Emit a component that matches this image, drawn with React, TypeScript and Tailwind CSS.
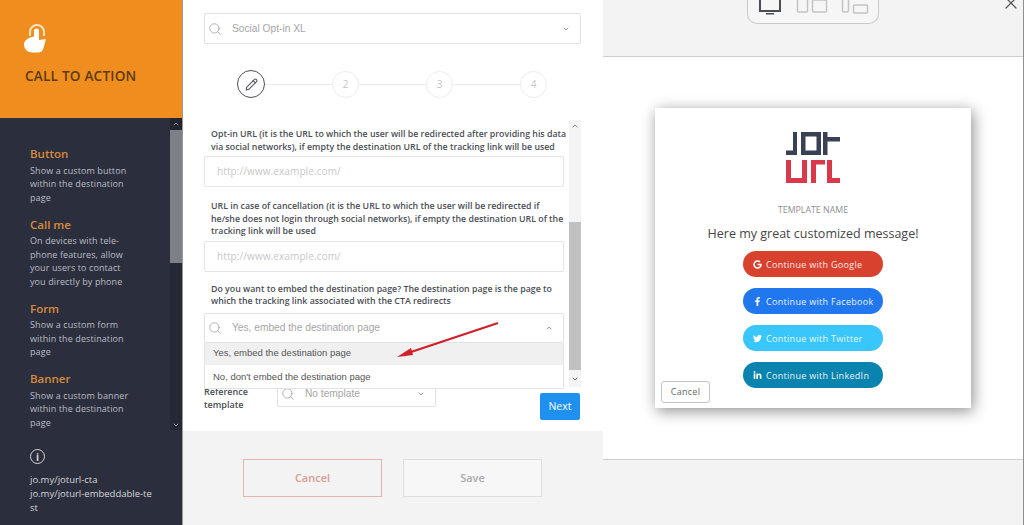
import React from 'react';
import { Search, ChevronDown, ChevronUp, Pencil, X } from 'lucide-react';
import { FaGoogle, FaFacebookF, FaTwitter, FaLinkedinIn } from 'react-icons/fa';

const openSans = "font-['Open_Sans',sans-serif]";
const arial = "font-['Liberation_Sans',Arial,sans-serif]";

const ctaItems = [
  { title: 'Button', lines: ['Show a custom button', 'within the destination', 'page'] },
  { title: 'Call me', lines: ['On devices with tele-', 'phone features, allow', 'your users to contact', 'you directly by phone'] },
  { title: 'Form', lines: ['Show a custom form', 'within the destination', 'page'] },
  { title: 'Banner', lines: ['Show a custom banner', 'within the destination', 'page'] },
];

const socialButtons = [
  { label: 'Continue with Google', icon: FaGoogle, color: 'bg-[#d9412f]' },
  { label: 'Continue with Facebook', icon: FaFacebookF, color: 'bg-[#2178ee]' },
  { label: 'Continue with Twitter', icon: FaTwitter, color: 'bg-[#38c6fb]' },
  { label: 'Continue with LinkedIn', icon: FaLinkedinIn, color: 'bg-[#0a84ae]' },
];

const TouchIcon = () => (
  <svg width="24" height="30" viewBox="0 0 24 30">
    <path d="M6 12V8a7 7 0 0 1 14 0v4" fill="none" stroke="#fbe3c2" strokeWidth="2" />
    <path
      d="M10 7a2.5 2.5 0 0 1 5 0v9l7-1-2.500 9a6 6 0 0 1-6 4.500H8a8 8 0 0 1-8-8c0-4 4-7 10-8z"
      fill="#fff"
    />
  </svg>
);

const JotUrlLogo = () => (
  <svg width="54" height="51" viewBox="0 0 54 51">
    <g fill="#3a4055">
      <rect x="0" y="18.500" width="11" height="4.500" />
      <rect x="7" y="0" width="4" height="23" />
      <path d="M15 0h20v23H15zM19.500 4.500v14h11v-14z" fillRule="evenodd" />
      <rect x="37" y="0" width="4.500" height="23" />
      <rect x="41" y="5" width="13" height="4.500" />
    </g>
    <g fill="#d9394a">
      <path d="M0 28h5v18h11V28h5v23H0z" />
      <path d="M25 51V28h14v4.500h-9V51z" />
      <path d="M41 28h5v18h8v5H41z" />
    </g>
  </svg>
);

const SelectBox = ({ text, open, className }: { text: string; open?: boolean; className: string }) => (
  <div className={`flex items-center border border-[#e2e2e2] bg-white rounded-[2px] ${className}`}>
    <Search className="w-[14px] h-[14px] ml-[3px] text-[#a8a8a8] shrink-0" strokeWidth={1.5} />
    <span className={`${arial} ml-[10px] text-[10.2px] text-[#a5a5a5] flex-1 truncate`}>{text}</span>
    {open ? (
      <ChevronUp className="w-[8px] h-[8px] mr-[10px] text-[#999]" strokeWidth={3} />
    ) : (
      <ChevronDown className="w-[8px] h-[8px] mr-[10px] text-[#999]" strokeWidth={3} />
    )}
  </div>
);

const UrlInput = () => (
  <div className={`${openSans} h-[31px] border border-[#e4e4e4] bg-white rounded-[2px] flex items-center pl-[12px] text-[10px] text-[#c8c8c8] tracking-[0.1px]`}>
    http://www.example.com/
  </div>
);

const Sidebar = () => (
  <aside className={`${openSans} w-[183px] shrink-0 flex flex-col bg-[#2b2f3d] border-r border-[#9a9a9a]`}>
    <div className="h-[118px] bg-[#ef8e1e] pl-[24px] pt-[24px]">
      <TouchIcon />
      <h1 className="mt-[12px] ml-px text-[13.6px] leading-[20px] font-semibold text-[#5c3a14] tracking-[0.2px]">CALL TO ACTION</h1>
    </div>
    <div className="h-[312px] flex shrink-0">
      <div className="flex-1 pl-[30px] pt-[28px] flex flex-col gap-[12.5px]">
        {ctaItems.map((item) => (
          <div key={item.title}>
            <div className="text-[11.5px] leading-[16px] font-semibold text-[#d98a3a] mb-[1.5px]">{item.title}</div>
            {item.lines.map((line) => (
              <div key={line} className="text-[9px] leading-[13.5px] text-[#b9bcc4] tracking-[0.1px] whitespace-nowrap">
                {line}
              </div>
            ))}
          </div>
        ))}
      </div>
      <div className="w-[12px] flex flex-col bg-[#252935]">
        <div className="h-[12px] flex items-center justify-center bg-[#22252f]">
          <ChevronUp className="w-[8px] h-[8px] text-[#8a8d95]" strokeWidth={3} />
        </div>
        <div className="h-[133px] bg-[#7d8087]" />
        <div className="flex-1" />
        <div className="h-[10px] flex items-center justify-center">
          <ChevronDown className="w-[8px] h-[8px] text-[#8a8d95]" strokeWidth={3} />
        </div>
      </div>
    </div>
    <div className="pl-[30px] pt-[19px] text-[#d4d6da]">
      <div className="w-[15px] h-[15px] rounded-full border-[1.5px] border-[#d4d6da] flex items-center justify-center text-[10px] font-bold leading-none">
        i
      </div>
      <div className="mt-[9px] text-[9.5px] leading-[14px] whitespace-nowrap">
        jo.my/joturl-cta
        <br />
        jo.my/joturl-embeddable-te
        <br />
        st
      </div>
    </div>
  </aside>
);

const Stepper = () => (
  <div className="mt-[26px] ml-[33px] flex items-center w-[310px]">
    <div className="w-[28px] h-[28px] rounded-full border-[1.5px] border-[#4c4f55] flex items-center justify-center shrink-0">
      <Pencil className="w-[13px] h-[13px] text-[#55585e]" strokeWidth={2} />
    </div>
    {['2', '3', '4'].map((n) => (
      <React.Fragment key={n}>
        <div className="flex-1 h-px bg-[#ececec]" />
        <div className={`${openSans} w-[27px] h-[27px] rounded-full border border-[#ececec] flex items-center justify-center text-[10px] text-[#c4c4c4] shrink-0`}>
          {n}
        </div>
      </React.Fragment>
    ))}
  </div>
);

const labelClass = `${openSans} text-[8.8px] leading-[12.5px] font-semibold text-[#4b4e55] pl-[7px] whitespace-nowrap`;

const FormPanel = () => (
  <main className="w-[420px] shrink-0 flex flex-col">
    <div className="h-[431px] shrink-0 bg-white pl-[21px] pr-[22px] pt-[13px]">
      <SelectBox text="Social Opt-in XL" className="h-[31px]" />
      <Stepper />
      <div className="mt-[22px] h-[267px] flex">
        <div className="w-[360px] shrink-0 pt-[8px]">
          <div className={labelClass}>
            Opt-in URL (it is the URL to which the user will be redirected after providing his data
            <br />
            via social networks), if empty the destination URL of the tracking link will be used
          </div>
          <div className="mt-[3px]">
            <UrlInput />
          </div>
          <div className={`${labelClass} mt-[13px]`}>
            URL in case of cancellation (it is the URL to which the user will be redirected if
            <br />
            he/she does not login through social networks), if empty the destination URL of the
            <br />
            tracking link will be used
          </div>
          <div className="mt-[3px]">
            <UrlInput />
          </div>
          <div className={`${labelClass} mt-[11px]`}>
            Do you want to embed the destination page? The destination page is the page to
            <br />
            which the tracking link associated with the CTA redirects
          </div>
          <div className="relative mt-[5px]">
            <SelectBox text="Yes, embed the destination page" open className="h-[30px]" />
            <div className={`${arial} absolute left-0 right-0 top-[30px] z-10 h-[46px] border border-t-0 border-[#e2e2e2] bg-white text-[9.5px] text-[#555] rounded-b-[2px]`}>
              <div className="h-[22px] bg-[#f0f0f0] flex items-center pl-[8px]">Yes, embed the destination page</div>
              <div className="h-[23px] mt-px flex items-center pl-[8px]">No, don't embed the destination page</div>
            </div>
            {/* red annotation arrow */}
            <svg className="absolute left-[190px] top-[8px] z-20" width="110" height="40" viewBox="0 0 110 40">
              <path d="M104 2 L14 32" stroke="#d0202a" strokeWidth="2.2" fill="none" />
              <path d="M3 36 L17 27 L19 34 Z" fill="#d0202a" />
            </svg>
          </div>
        </div>
        <div className="w-[12px] ml-[5px] flex flex-col bg-[#f4f4f4]">
          <div className="h-[12px] flex items-center justify-center">
            <ChevronUp className="w-[8px] h-[8px] text-[#888]" strokeWidth={3} />
          </div>
          <div className="h-[90px]" />
          <div className="flex-1 bg-[#c1c1c1]" />
          <div className="h-[17px] flex items-center justify-center">
            <ChevronDown className="w-[8px] h-[8px] text-[#666]" strokeWidth={3} />
          </div>
        </div>
      </div>
      <div className="flex items-start -mt-[7px]">
        <div className={`${openSans} w-[73px] mt-[6px] text-[9px] leading-[12.5px] font-semibold text-[#4b4e55]`}>
          Reference
          <br />
          template
        </div>
        <SelectBox text="No template" className="w-[159px] h-[27px]" />
        <button className={`${openSans} ml-[104px] mt-[13px] w-[40px] h-[27px] bg-[#1e90f0] text-white text-[10.5px] rounded-[2px]`}>
          Next
        </button>
      </div>
    </div>
    <div className={`${openSans} flex-1 bg-[#f3f3f3] pl-[60px] pt-[28px] flex gap-[21px] text-[11px] font-semibold`}>
      <button className="w-[139px] h-[38px] border border-[#e6b4ac] text-[#d99c94]">Cancel</button>
      <button className="w-[139px] h-[38px] border border-[#dedede] bg-[#f7f7f7] text-[#aaaaaa]">Save</button>
    </div>
  </main>
);

const DeviceSwitcher = () => (
  <div className="w-[132px] h-[24px] ml-[144px] border border-t-0 border-[#c9c9c9] rounded-b-[10px] bg-[#f6f6f6] flex items-start pl-[11px]">
    <svg width="118" height="20" viewBox="0 0 118 20" fill="none">
      <rect x="1" y="-6" width="20" height="17" stroke="#4a4d52" strokeWidth="2" />
      <rect x="7" y="13" width="8" height="1.5" fill="#4a4d52" />
      <rect x="38.5" y="-6" width="10" height="18" rx="1" stroke="#c4c4c4" strokeWidth="1.5" />
      <rect x="53.5" y="0" width="14" height="12" rx="1" stroke="#c4c4c4" strokeWidth="1.5" />
      <rect x="83.5" y="-4" width="6" height="16" rx="1.5" stroke="#c4c4c4" strokeWidth="1.5" />
      <rect x="94.5" y="5" width="14" height="8" rx="1" stroke="#c4c4c4" strokeWidth="1.5" />
    </svg>
  </div>
);

const PreviewCard = () => (
  <div className={`${openSans} relative w-[316px] h-[300px] bg-white shadow-[2px_3px_14px_rgba(0,0,0,0.45)] flex flex-col items-center pt-[24px]`}>
    <JotUrlLogo />
    <div className="mt-[21px] text-[8.8px] leading-[12px] text-[#8f8f8f]">TEMPLATE NAME</div>
    <div className="mt-[9px] text-[12.5px] leading-[18px] text-[#454545]">Here my great customized message!</div>
    <div className="mt-[8px] flex flex-col gap-[11px]">
      {socialButtons.map((btn) => (
        <div key={btn.label} className={`${btn.color} w-[140px] h-[26px] rounded-full flex items-center pl-[7px] text-white`}>
          <span className="w-[14px] flex justify-center">
            <btn.icon className="w-[9px] h-[9px]" />
          </span>
          <span className="ml-[2px] mt-px text-[9px] tracking-[0.3px] whitespace-nowrap opacity-90">{btn.label}</span>
        </div>
      ))}
    </div>
    <button className="absolute left-[6px] bottom-[5px] w-[49px] h-[22px] border border-[#c4c4c4] rounded-[3px] bg-white text-[9px] tracking-[0.3px] text-[#666]">
      Cancel
    </button>
  </div>
);

const PreviewPanel = () => (
  <section className="relative flex-1 flex flex-col bg-[#f3f3f3] border-r border-[#8f8f8f]">
    <div className="h-[57px] shrink-0 border-b border-[#cfcfcf]">
      <DeviceSwitcher />
    </div>
    <div className="h-[402px] shrink-0 bg-white flex items-center justify-center">
      <PreviewCard />
    </div>
    <div className="flex-1 border-t border-[#cfcfcf]" />
    <X className="absolute right-[2px] -top-[7px] w-[20px] h-[20px] text-[#555]" strokeWidth={1.5} />
  </section>
);

export default function App() {
  return (
    <div className="w-[1024px] h-[525px] flex overflow-hidden bg-white">
      <Sidebar />
      <FormPanel />
      <PreviewPanel />
    </div>
  );
}
